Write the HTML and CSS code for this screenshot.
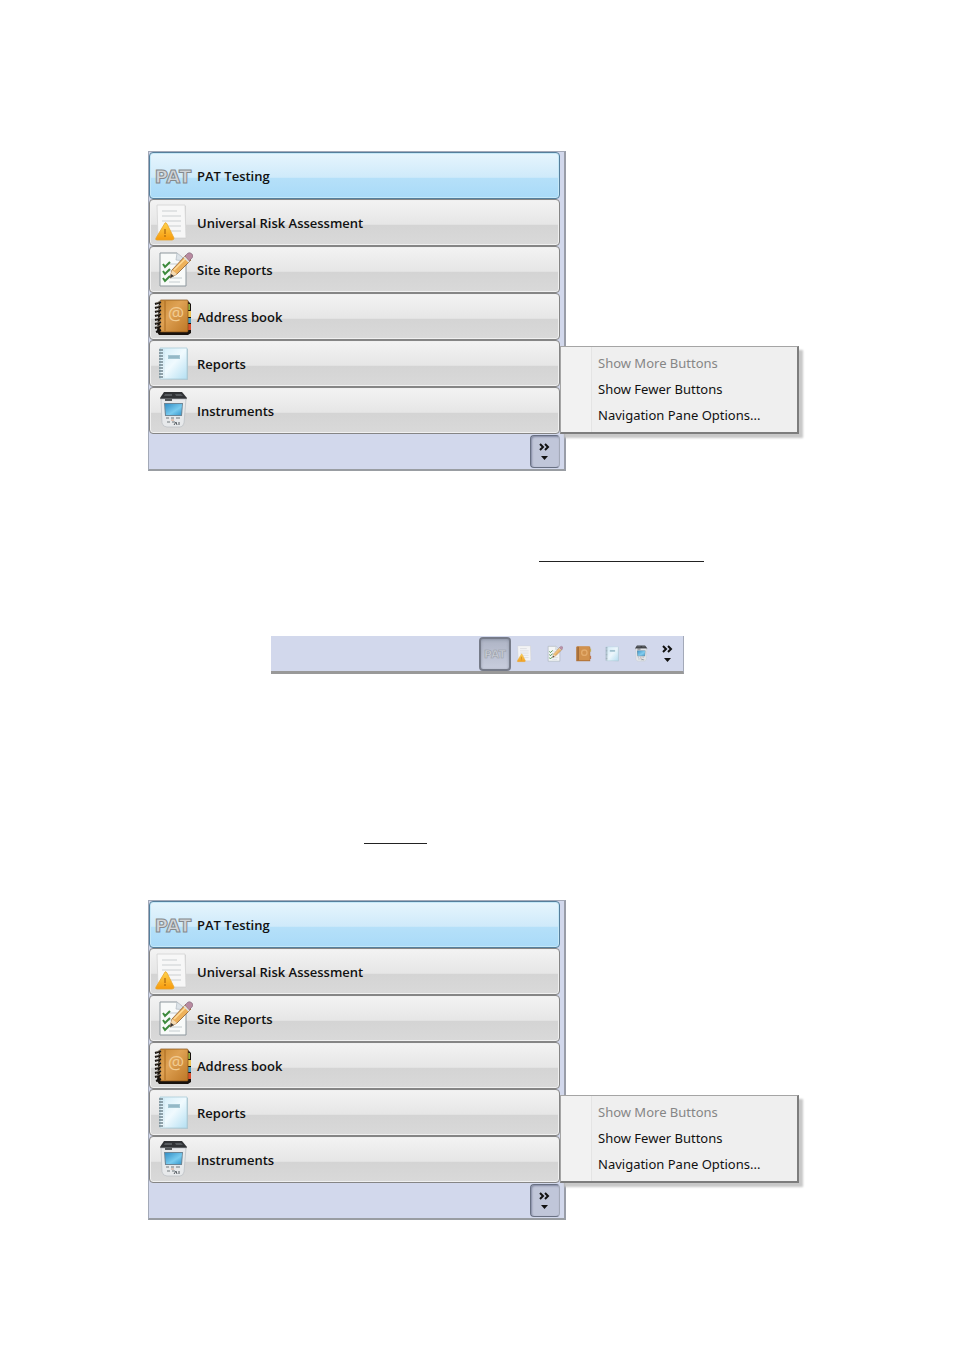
FILE: index.html
```html
<!DOCTYPE html>
<html lang="en">
<head>
    <meta charset="UTF-8">
    <meta name="viewport" content="width=device-width, initial-scale=1.0">
    <title>Navigation Pane</title>
    <link rel="stylesheet" href="styles.css">
</head>
<body>
    <svg class="sprite" aria-hidden="true">
        <defs>
            <linearGradient id="bookFill" x1="0" y1="0" x2="1" y2="1">
                <stop offset="0" stop-color="#c98a35"/>
                <stop offset=".4" stop-color="#dfa254"/>
                <stop offset="1" stop-color="#bd7726"/>
            </linearGradient>
            <linearGradient id="noteFill" x1="0" y1="0" x2="1" y2="1">
                <stop offset="0" stop-color="#d2edf8"/>
                <stop offset=".5" stop-color="#f0fafe"/>
                <stop offset="1" stop-color="#b4dff2"/>
            </linearGradient>
            <linearGradient id="screenFill" x1="0" y1="0" x2="1" y2="1">
                <stop offset="0" stop-color="#328fc6"/>
                <stop offset=".6" stop-color="#79cbef"/>
                <stop offset="1" stop-color="#3899cd"/>
            </linearGradient>
            <linearGradient id="warnFill" x1="0" y1="0" x2="0" y2="1">
                <stop offset="0" stop-color="#ffd34d"/>
                <stop offset="1" stop-color="#f79a0c"/>
            </linearGradient>
        </defs>

        <symbol id="icon-risk" viewBox="0 0 40 40">
            <path d="M5 3h28v33H5z" fill="#d2d2d2"/>
            <path d="M4 2h28l1 33H5z" fill="#f7f7f7" stroke="#d3d3d3" stroke-width=".8"/>
            <path d="M9 8h15M9 13h19M9 18h19M14 23h14M17 28h11" stroke="#cccfd2" stroke-width="1.2"/>
            <path d="M12 20q1-1 2 1l7 14q0 2-2 2H4q-2 0-1-2z" fill="url(#warnFill)" stroke="#e9a52a" stroke-width=".8"/>
            <path d="M12 26v5M12 32v2" stroke="#b87312" stroke-width="1.4"/>
        </symbol>

        <symbol id="icon-site" viewBox="0 0 40 40">
            <path d="M7 3h17l9 8v25H7z" fill="#f8faf9" stroke="#8d979d"/>
            <path d="M24 3l-1 7 10 1" fill="#dce3e8" stroke="#b0b9c0" stroke-width=".7"/>
            <path d="M16 14h8M16 21h10M17 28h12M16 32h11" stroke="#c4cccf"/>
            <path d="M10 14l2 3 5-5M10 21l2 3 5-5M10 28l2 3 5-5" fill="none" stroke="#3c8a3c" stroke-width="2"/>
            <path d="M17 28l2-8L33 5l5 5-14 14z" fill="#edb15b" stroke="#8c5c2e" stroke-width=".8"/>
            <path d="M21 20L35 6" stroke="#ffdc98" stroke-width="1.500"/>
            <path d="M17 28l2-8 5 4z" fill="#f4d9b0"/>
            <path d="M17 28l1-4 3 2z" fill="#333"/>
            <path d="M32 6l3-3q2-1 4 1t0 4l-3 3z" fill="#b88aa0" stroke="#7e667b" stroke-width=".6"/>
            <path d="M31 7l5 5" stroke="#dce1e7" stroke-width="1.5"/>
        </symbol>

        <symbol id="icon-book" viewBox="0 0 40 40">
            <path d="M6 4h29l3 3v29l-3 2H6l-2-3z" fill="#18120e"/>
            <path d="M34 7h3v6h-3z" fill="#91ab3b"/>
            <path d="M34 14h4v6h-4z" fill="#edc354"/>
            <path d="M34 21h4v5h-4z" fill="#4c9bbc"/>
            <path d="M34 27h4v6h-4z" fill="#d84f2d"/>
            <rect x="7" y="3" width="28" height="32" rx="1" fill="url(#bookFill)" stroke="#855119" stroke-width=".7"/>
            <path d="M12 4v30" stroke="#a8681f"/>
            <path d="M2 7l6-2M2 11l6-2M2 15l6-2M2 19l6-2M2 23l6-2M2 27l6-2M2 31l6-2M3 35l5-2" stroke="#16120f" stroke-width="2"/>
            <path d="M3 6l5-2M3 10l5-2M3 14l5-2M3 18l5-2M3 22l5-2M3 26l5-2M3 30l5-2" stroke="#c5b7a1" stroke-width=".6"/>
        </symbol>

        <symbol id="icon-book-small" viewBox="0 0 40 40">
            <path d="M5 4h31v32H5z" fill="#a86424"/>
            <path d="M35 8h3v7h-3z" fill="#c3a94b"/>
            <path d="M35 24h3v7h-3z" fill="#b96a40"/>
            <rect x="6" y="3" width="29" height="31" rx="1" fill="#d18a3c"/>
            <path d="M9 4v30" stroke="#8d5420" stroke-width="3"/>
            <circle cx="23" cy="17" r="6" fill="none" stroke="#e5a65e" stroke-width="3"/>
        </symbol>

        <symbol id="icon-reports" viewBox="0 0 40 40">
            <path d="M8 5h27v31l-27-1z" fill="#b4c6ce"/>
            <path d="M7 4h27v31H7z" fill="url(#noteFill)" stroke="#aacbd8" stroke-width=".8"/>
            <path d="M11 4v31" stroke="#c8e1eb" stroke-width=".7"/>
            <path d="M6 6h4M6 9h4M6 12h4M6 15h4M6 18h4M6 21h4M6 24h4M6 27h4M6 30h4M6 33h4" stroke="#71858f" stroke-width="1.3"/>
            <rect x="15" y="11" width="12" height="4" fill="#a4c6d2"/>
            <path d="M16 13h10" stroke="#7da5b5" stroke-width=".8"/>
        </symbol>

        <symbol id="icon-instruments" viewBox="0 0 40 40">
            <path d="M11 1h18l5 6-2 3H9L7 7z" fill="#303235"/>
            <path d="M12 3h7v2h-8zM22 3h6l2 2h-7z" fill="#565a5e"/>
            <path d="M8 8h25l-2 24q-1 4-4 4H14q-4 0-5-4z" fill="#e7e9eb" stroke="#b9bdc1" stroke-width=".7"/>
            <path d="M12 9h7" stroke="#24282b" stroke-width="1.5"/>
            <path d="M11 12h19l-1 13H12z" fill="#6d8595"/>
            <path d="M12 13h17l-1 11H13z" fill="url(#screenFill)"/>
            <path d="M13 27h3M18 27h3M23 27h4M14 31h3M19 31h3" stroke="#989da1" stroke-width="1.5"/>
            <path d="M21 34l2-3 1 3M26 34v-3" fill="none" stroke="#555b61"/>
            <path d="M18 29h3" stroke="#d79d80"/>
        </symbol>

        <symbol id="icon-more" viewBox="0 0 14 20">
            <path d="M2 2l3 3-3 3M7 2l3 3-3 3" fill="none" stroke="#111" stroke-width="2"/>
            <path d="M3 14h7l-3.500 4z" fill="#111"/>
        </symbol>
    </svg>

    <main class="page">
        <section class="pane">
            <nav class="pane-nav" aria-label="Modules">
                <button class="nav-button active"><svg viewBox="0 0 40 40"><text class="pat-text" x="20" y="27" text-anchor="middle">PAT</text></svg>PAT Testing</button>
                <button class="nav-button"><svg><use href="#icon-risk"/></svg>Universal Risk Assessment</button>
                <button class="nav-button"><svg><use href="#icon-site"/></svg>Site Reports</button>
                <button class="nav-button"><svg viewBox="0 0 40 40"><use href="#icon-book"/><text class="at-text" x="23" y="23" text-anchor="middle">@</text></svg>Address book</button>
                <button class="nav-button"><svg><use href="#icon-reports"/></svg>Reports</button>
                <button class="nav-button"><svg><use href="#icon-instruments"/></svg>Instruments</button>
            </nav>
            <div class="pane-footer">
                <button class="overflow-button" aria-label="Configure buttons"><svg><use href="#icon-more"/></svg></button>
            </div>
            <div class="menu" role="menu">
                <button role="menuitem" disabled>Show More Buttons</button>
                <button role="menuitem">Show Fewer Buttons</button>
                <button role="menuitem">Navigation Pane Options...</button>
            </div>
        </section>

        <hr class="rule rule-long">

        <div class="toolbar" role="toolbar" aria-label="Collapsed modules">
            <button class="tool active" aria-label="PAT Testing"><svg viewBox="0 0 40 40"><text class="pat-text" x="20" y="27" text-anchor="middle">PAT</text></svg></button>
            <button class="tool" aria-label="Universal Risk Assessment"><svg><use href="#icon-risk"/></svg></button>
            <button class="tool" aria-label="Site Reports"><svg><use href="#icon-site"/></svg></button>
            <button class="tool" aria-label="Address book"><svg><use href="#icon-book-small"/></svg></button>
            <button class="tool" aria-label="Reports"><svg><use href="#icon-reports"/></svg></button>
            <button class="tool" aria-label="Instruments"><svg><use href="#icon-instruments"/></svg></button>
            <button class="tool tool-more" aria-label="Configure buttons"><svg><use href="#icon-more"/></svg></button>
        </div>

        <hr class="rule rule-short">

        <section class="pane">
            <nav class="pane-nav" aria-label="Modules">
                <button class="nav-button active"><svg viewBox="0 0 40 40"><text class="pat-text" x="20" y="27" text-anchor="middle">PAT</text></svg>PAT Testing</button>
                <button class="nav-button"><svg><use href="#icon-risk"/></svg>Universal Risk Assessment</button>
                <button class="nav-button"><svg><use href="#icon-site"/></svg>Site Reports</button>
                <button class="nav-button"><svg viewBox="0 0 40 40"><use href="#icon-book"/><text class="at-text" x="23" y="23" text-anchor="middle">@</text></svg>Address book</button>
                <button class="nav-button"><svg><use href="#icon-reports"/></svg>Reports</button>
                <button class="nav-button"><svg><use href="#icon-instruments"/></svg>Instruments</button>
            </nav>
            <div class="pane-footer">
                <button class="overflow-button" aria-label="Configure buttons"><svg><use href="#icon-more"/></svg></button>
            </div>
            <div class="menu" role="menu">
                <button role="menuitem" disabled>Show More Buttons</button>
                <button role="menuitem">Show Fewer Buttons</button>
                <button role="menuitem">Navigation Pane Options...</button>
            </div>
        </section>
    </main>
</body>
</html>
```
FILE: styles.css
```css
* {
    margin: 0;
    padding: 0;
    box-sizing: border-box;
}

body {
    background: #ffffff;
    font-family: "Noto Sans", "Open Sans", sans-serif;
    font-size: 13px;
    color: #111111;
}

button {
    font: inherit;
    color: inherit;
    border: none;
    background: none;
}

.sprite {
    position: absolute;
    width: 0;
    height: 0;
}

.page {
    max-width: 658px;
    margin: 0 auto;
    padding: 151px 0 131px;
}

/* Navigation pane */
.pane {
    position: relative;
    max-width: 418px;
    background: #d2d8ec;
    border: 1px solid #a3a9b8;
    border-right: 2px solid #999da8;
    border-bottom: 2px solid #999da2;
}

.pane-nav {
    display: flex;
    flex-direction: column;
    padding-right: 4px;
}

.nav-button {
    display: flex;
    align-items: center;
    gap: 4px;
    height: 47px;
    padding: 1px 3px 0;
    border: 1px solid #858585;
    border-radius: 4px;
    background: linear-gradient(#f3f3f3, #e6e6e6 54%, #d4d4d4 56%, #d9d9d9);
    box-shadow: inset 0 0 0 1px #f0f0f0;
    font-family: "Open Sans", sans-serif;
    font-weight: 600;
    text-align: left;
}

.nav-button.active {
    border-color: #557f9c;
    background: linear-gradient(#e6f5fd, #cfeafa 54%, #b5e0f9 56%, #a9daf8);
    box-shadow: inset 0 0 0 1px #c5e8f8;
}

.nav-button svg {
    width: 40px;
    height: 40px;
}

.pane-footer {
    display: flex;
    justify-content: flex-end;
    height: 35px;
    padding: 1px 4px 1px 0;
}

.overflow-button {
    width: 30px;
    border: 1px solid #687083;
    border-right-color: #a3a9b8;
    border-radius: 4px;
    background: #c0c6d9;
    box-shadow: inset 1px 1px 2px #8087a0;
}

.overflow-button svg,
.tool-more svg {
    display: block;
    width: 14px;
    height: 20px;
    margin: 0 auto;
}

/* Popup menu, opens over the right edge of the pane */
.menu {
    position: absolute;
    left: calc(100% - 4px);
    bottom: 35px;
    display: flex;
    flex-direction: column;
    width: 239px;
    padding: 3px 0 4px;
    background: linear-gradient(90deg, #f2f2f2 30px, #e4e4e4 30px, #e4e4e4 31px, #efefef 31px);
    border: 1px solid #a5a5a5;
    border-right: 2px solid #7d7d7d;
    border-bottom: 2px solid #7d7d7d;
    box-shadow: 4px 4px 2px #c8c8c8;
}

.menu button {
    height: 26px;
    padding-left: 37px;
    text-align: left;
    white-space: nowrap;
}

.menu button:disabled {
    color: #868686;
}

/* Collapsed toolbar */
.toolbar {
    display: flex;
    justify-content: flex-end;
    max-width: 413px;
    height: 38px;
    margin: 0 auto;
    padding: 1px 3px 0 0;
    background: #d2d8ec;
    border-right: 1px solid #a3a9b8;
    border-bottom: 3px solid #999999;
}

.tool {
    display: flex;
    align-items: center;
    justify-content: center;
    width: 29px;
}

.tool svg {
    width: 18px;
    height: 18px;
    opacity: 0.9;
}

.tool.active {
    width: 32px;
    border: 2px solid #767b89;
    border-radius: 4px;
    background: linear-gradient(#aeb4c5, #c8cddd);
    box-shadow: inset 0 1px 3px #8f96a8;
}

.tool.active svg {
    width: 24px;
    height: 24px;
    opacity: 0.6;
}

.tool.tool-more {
    width: 24px;
}

.tool.tool-more svg {
    width: 14px;
    height: 20px;
    opacity: 1;
}

.rule {
    height: 1px;
    border: none;
    background: #222222;
}

.rule-long {
    width: 165px;
    margin: 90px 0 74px 391px;
}

.rule-short {
    width: 63px;
    margin: 169px 0 56px 216px;
}

/* Lettering inside the icons */
.pat-text {
    font: bold 18px "DejaVu Sans", sans-serif;
    fill: #d2d5d8;
    stroke: #85898c;
    stroke-width: 1px;
}

.at-text {
    font: 18px "Open Sans", sans-serif;
    fill: #f1cb91;
}
```
